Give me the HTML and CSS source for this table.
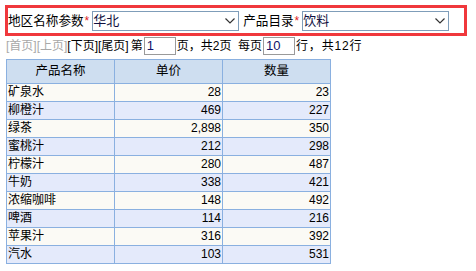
FILE: index.html
```html
<!DOCTYPE html>
<html>
<head>
<meta charset="utf-8">
<link rel="stylesheet" href="styles.css">
</head>
<body>
<div class="filter">
  <span class="label">地区名称参数<span class="req">*</span></span>
  <div class="select"><span class="val">华北</span><svg class="chev" width="10" height="6" viewBox="0 0 10 6"><path d="M0.5 0.5 L5 5 L9.5 0.5" fill="none" stroke="#333" stroke-width="1.2"/></svg></div>
  <span class="label label2">产品目录<span class="req">*</span></span>
  <div class="select"><span class="val">饮料</span><svg class="chev" width="10" height="6" viewBox="0 0 10 6"><path d="M0.5 0.5 L5 5 L9.5 0.5" fill="none" stroke="#333" stroke-width="1.2"/></svg></div>
</div>
<div class="pager">
  <span class="dis">[首页]</span><span class="dis">[上页]</span><span class="en">[下页]</span><span class="en">[尾页]</span>
  <span class="txt first">第</span><span class="box">1</span><span class="txt">页，共2页&nbsp;&nbsp;每页</span><span class="box">10</span><span class="txt wide">行，共12行</span>
</div>
<table class="grid">
  <thead>
    <tr><th>产品名称</th><th>单价</th><th>数量</th></tr>
  </thead>
  <tbody>
    <tr><td>矿泉水</td><td class="n">28</td><td class="n">23</td></tr>
    <tr><td>柳橙汁</td><td class="n">469</td><td class="n">227</td></tr>
    <tr><td>绿茶</td><td class="n">2,898</td><td class="n">350</td></tr>
    <tr><td>蜜桃汁</td><td class="n">212</td><td class="n">298</td></tr>
    <tr><td>柠檬汁</td><td class="n">280</td><td class="n">487</td></tr>
    <tr><td>牛奶</td><td class="n">338</td><td class="n">421</td></tr>
    <tr><td>浓缩咖啡</td><td class="n">148</td><td class="n">492</td></tr>
    <tr><td>啤酒</td><td class="n">114</td><td class="n">216</td></tr>
    <tr><td>苹果汁</td><td class="n">316</td><td class="n">392</td></tr>
    <tr><td>汽水</td><td class="n">103</td><td class="n">531</td></tr>
  </tbody>
</table>
</body>
</html>
```

FILE: styles.css
```css
html, body {
  margin: 0;
  padding: 0;
  background: #fff;
}
body {
  padding: 5px 0 0 5px;
  font-family: "Liberation Sans", "Noto Sans CJK SC", sans-serif;
  font-size: 12px;
  color: #000;
}
.filter {
  width: 456px;
  height: 25px;
  border: 3px solid #f0383c;
  display: flex;
  align-items: center;
}
.label {
  font-size: 12.6px;
  line-height: 20px;
  white-space: nowrap;
}
.req {
  color: #e02020;
  font-size: 12px;
  margin-left: 1px;
}
.label2 {
  margin-left: 4px;
}
.select {
  box-sizing: border-box;
  width: 147px;
  height: 20px;
  border: 1px solid #7f9db9;
  margin-left: 3px;
  display: flex;
  align-items: center;
  justify-content: space-between;
  background: #fff;
}
.val {
  font-size: 13px;
  line-height: 18px;
  color: #101040;
}
.chev {
  margin-right: 3px;
  margin-top: 1px;
}
.pager {
  height: 18px;
  margin-top: 1px;
  padding-left: 1px;
  display: flex;
  align-items: center;
  white-space: nowrap;
  line-height: 18px;
  font-size: 12px;
}
.dis {
  color: #a8a8a8;
}
.en {
  color: #000;
}
.txt {
  color: #000;
}
.first {
  margin-left: 2px;
}
.wide {
  letter-spacing: 0.8px;
}
.box {
  box-sizing: border-box;
  width: 32px;
  height: 18px;
  border: 1px solid #9a9a9a;
  padding-left: 2px;
  font-size: 13px;
  line-height: 16px;
  color: #10106a;
  margin: 0 1px;
}
.grid {
  border-collapse: collapse;
  margin-top: 4px;
  margin-left: 1px;
  table-layout: fixed;
  width: 325px;
}
.grid th, .grid td {
  border: 1px solid #8ab0e0;
  padding: 0 2px;
  font-weight: normal;
  overflow: hidden;
  white-space: nowrap;
}
.grid th {
  background: #cedef0;
  height: 23px;
  line-height: 23px;
  text-align: center;
  font-size: 12.5px;
}
.grid td {
  height: 17px;
  line-height: 17px;
  font-size: 12px;
  padding-left: 1px;
}
.grid td.n {
  text-align: right;
  padding-right: 1px;
}
.grid tbody tr:nth-child(odd) td {
  background: #fbfaf5;
}
.grid tbody tr:nth-child(even) td {
  background: #e4eafb;
}
```
